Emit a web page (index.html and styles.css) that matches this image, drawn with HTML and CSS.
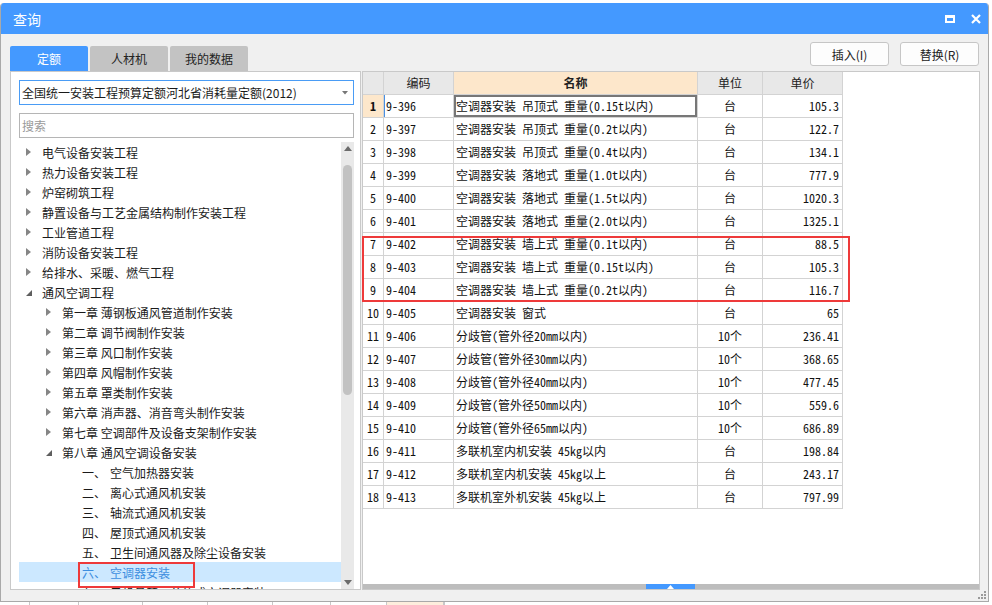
FILE: index.html
```html
<!DOCTYPE html>
<html lang="zh-CN">
<head>
<meta charset="utf-8">
<title>查询</title>
<link rel="stylesheet" href="styles.css">
</head>
<body>
<div class="window">
  <div class="titlebar">
    <span class="title">查询</span>
    <div class="win-ctrls">
      <span class="max"></span>
      <svg class="close" width="10" height="10" viewBox="0 0 10 10"><path d="M1 1 L9 9 M9 1 L1 9" stroke="#fff" stroke-width="2.2" fill="none"/></svg>
    </div>
  </div>
  <div class="content">
    <div class="tabs">
      <div class="tab active">定额</div>
      <div class="tab t2">人材机</div>
      <div class="tab">我的数据</div>
    </div>
    <div class="actions">
      <button class="btn">插入(I)</button>
      <button class="btn">替换(R)</button>
    </div>
    <div class="panel left-panel">
      <div class="select">
        <span>全国统一安装工程预算定额河北省消耗量定额(2012)</span>
        <svg width="6" height="4" viewBox="0 0 6 4"><path d="M0 0 H6 L3 3.5Z" fill="#777"/></svg>
      </div>
      <div class="search">搜索</div>
      <div class="tree-wrap">
        <ul class="tree">
          <li class="row l1"><span class="arr"><svg width="5" height="8" viewBox="0 0 5 8"><path d="M0 0 L5 4 L0 8Z"/></svg></span>电气设备安装工程</li>
          <li class="row l1"><span class="arr"><svg width="5" height="8" viewBox="0 0 5 8"><path d="M0 0 L5 4 L0 8Z"/></svg></span>热力设备安装工程</li>
          <li class="row l1"><span class="arr"><svg width="5" height="8" viewBox="0 0 5 8"><path d="M0 0 L5 4 L0 8Z"/></svg></span>炉窑砌筑工程</li>
          <li class="row l1"><span class="arr"><svg width="5" height="8" viewBox="0 0 5 8"><path d="M0 0 L5 4 L0 8Z"/></svg></span>静置设备与工艺金属结构制作安装工程</li>
          <li class="row l1"><span class="arr"><svg width="5" height="8" viewBox="0 0 5 8"><path d="M0 0 L5 4 L0 8Z"/></svg></span>工业管道工程</li>
          <li class="row l1"><span class="arr"><svg width="5" height="8" viewBox="0 0 5 8"><path d="M0 0 L5 4 L0 8Z"/></svg></span>消防设备安装工程</li>
          <li class="row l1"><span class="arr"><svg width="5" height="8" viewBox="0 0 5 8"><path d="M0 0 L5 4 L0 8Z"/></svg></span>给排水、采暖、燃气工程</li>
          <li class="row l1"><span class="arr open"><svg width="6" height="6" viewBox="0 0 6 6"><path d="M6 0 L6 6 L0 6Z"/></svg></span>通风空调工程</li>
          <li class="row l2"><span class="arr"><svg width="5" height="8" viewBox="0 0 5 8"><path d="M0 0 L5 4 L0 8Z"/></svg></span>第一章 薄钢板通风管道制作安装</li>
          <li class="row l2"><span class="arr"><svg width="5" height="8" viewBox="0 0 5 8"><path d="M0 0 L5 4 L0 8Z"/></svg></span>第二章 调节阀制作安装</li>
          <li class="row l2"><span class="arr"><svg width="5" height="8" viewBox="0 0 5 8"><path d="M0 0 L5 4 L0 8Z"/></svg></span>第三章 风口制作安装</li>
          <li class="row l2"><span class="arr"><svg width="5" height="8" viewBox="0 0 5 8"><path d="M0 0 L5 4 L0 8Z"/></svg></span>第四章 风帽制作安装</li>
          <li class="row l2"><span class="arr"><svg width="5" height="8" viewBox="0 0 5 8"><path d="M0 0 L5 4 L0 8Z"/></svg></span>第五章 罩类制作安装</li>
          <li class="row l2"><span class="arr"><svg width="5" height="8" viewBox="0 0 5 8"><path d="M0 0 L5 4 L0 8Z"/></svg></span>第六章 消声器、消音弯头制作安装</li>
          <li class="row l2"><span class="arr"><svg width="5" height="8" viewBox="0 0 5 8"><path d="M0 0 L5 4 L0 8Z"/></svg></span>第七章 空调部件及设备支架制作安装</li>
          <li class="row l2"><span class="arr open"><svg width="6" height="6" viewBox="0 0 6 6"><path d="M6 0 L6 6 L0 6Z"/></svg></span>第八章 通风空调设备安装</li>
          <li class="row l3"><span class="num">一、</span>空气加热器安装</li>
          <li class="row l3"><span class="num">二、</span>离心式通风机安装</li>
          <li class="row l3"><span class="num">三、</span>轴流式通风机安装</li>
          <li class="row l3"><span class="num">四、</span>屋顶式通风机安装</li>
          <li class="row l3"><span class="num">五、</span>卫生间通风器及除尘设备安装</li>
          <li class="row l3 selected"><span class="num">六、</span>空调器安装</li>
          <li class="row l3"><span class="num">七、</span>风机盘管、分体式空调器安装</li>
        </ul>
        <div class="vscroll">
          <div class="sb-arrow"><svg width="8" height="5" viewBox="0 0 8 5"><path d="M0 5 L4 0 L8 5Z" fill="#6b6b6b"/></svg></div>
          <div class="sb-thumb"></div>
          <div class="sb-fill"></div>
          <div class="sb-arrow"><svg width="8" height="5" viewBox="0 0 8 5"><path d="M0 0 L8 0 L4 5Z" fill="#6b6b6b"/></svg></div>
        </div>
        <div class="mark mark-tree"></div>
      </div>
    </div>
    <div class="panel right-panel">
      <div class="table-area">
        <div class="grid">
          <div class="c h corner"></div><div class="c h">编码</div><div class="c h hl">名称</div><div class="c h">单位</div><div class="c h">单价</div>

          <div class="c n cur">1</div><div class="c code caret">9-396</div><div class="c name focus">空调器安装 吊顶式 重量(0.15t以内)</div><div class="c unit">台</div><div class="c price">105.3</div>
          <div class="c n">2</div><div class="c code">9-397</div><div class="c name">空调器安装 吊顶式 重量(0.2t以内)</div><div class="c unit">台</div><div class="c price">122.7</div>
          <div class="c n">3</div><div class="c code">9-398</div><div class="c name">空调器安装 吊顶式 重量(0.4t以内)</div><div class="c unit">台</div><div class="c price">134.1</div>
          <div class="c n">4</div><div class="c code">9-399</div><div class="c name">空调器安装 落地式 重量(1.0t以内)</div><div class="c unit">台</div><div class="c price">777.9</div>
          <div class="c n">5</div><div class="c code">9-400</div><div class="c name">空调器安装 落地式 重量(1.5t以内)</div><div class="c unit">台</div><div class="c price">1020.3</div>
          <div class="c n">6</div><div class="c code">9-401</div><div class="c name">空调器安装 落地式 重量(2.0t以内)</div><div class="c unit">台</div><div class="c price">1325.1</div>
          <div class="c n">7</div><div class="c code">9-402</div><div class="c name">空调器安装 墙上式 重量(0.1t以内)</div><div class="c unit">台</div><div class="c price">88.5</div>
          <div class="c n">8</div><div class="c code">9-403</div><div class="c name">空调器安装 墙上式 重量(0.15t以内)</div><div class="c unit">台</div><div class="c price">105.3</div>
          <div class="c n">9</div><div class="c code">9-404</div><div class="c name">空调器安装 墙上式 重量(0.2t以内)</div><div class="c unit">台</div><div class="c price">116.7</div>
          <div class="c n">10</div><div class="c code">9-405</div><div class="c name">空调器安装 窗式</div><div class="c unit">台</div><div class="c price">65</div>
          <div class="c n">11</div><div class="c code">9-406</div><div class="c name">分歧管(管外径20mm以内)</div><div class="c unit">10个</div><div class="c price">236.41</div>
          <div class="c n">12</div><div class="c code">9-407</div><div class="c name">分歧管(管外径30mm以内)</div><div class="c unit">10个</div><div class="c price">368.65</div>
          <div class="c n">13</div><div class="c code">9-408</div><div class="c name">分歧管(管外径40mm以内)</div><div class="c unit">10个</div><div class="c price">477.45</div>
          <div class="c n">14</div><div class="c code">9-409</div><div class="c name">分歧管(管外径50mm以内)</div><div class="c unit">10个</div><div class="c price">559.6</div>
          <div class="c n">15</div><div class="c code">9-410</div><div class="c name">分歧管(管外径65mm以内)</div><div class="c unit">10个</div><div class="c price">686.89</div>
          <div class="c n">16</div><div class="c code">9-411</div><div class="c name">多联机室内机安装 45kg以内</div><div class="c unit">台</div><div class="c price">198.84</div>
          <div class="c n">17</div><div class="c code">9-412</div><div class="c name">多联机室内机安装 45kg以上</div><div class="c unit">台</div><div class="c price">243.17</div>
          <div class="c n">18</div><div class="c code">9-413</div><div class="c name">多联机室外机安装 45kg以上</div><div class="c unit">台</div><div class="c price">797.99</div>
        </div>
      </div>
      <div class="hscroll">
        <div class="hthumb"><svg width="7" height="4" viewBox="0 0 7 4"><path d="M0 4 L3.5 0 L7 4Z" fill="#fff"/></svg></div>
      </div>
      <div class="mark mark-grid"></div>
    </div>
  </div>
  <div class="statusbar">
    <svg class="grip" width="10" height="10" viewBox="0 0 10 10">
      <rect x="7" y="1" width="2" height="2" fill="#9a9a9a"/>
      <rect x="4" y="4" width="2" height="2" fill="#9a9a9a"/>
      <rect x="7" y="4" width="2" height="2" fill="#9a9a9a"/>
      <rect x="1" y="7" width="2" height="2" fill="#9a9a9a"/>
      <rect x="4" y="7" width="2" height="2" fill="#9a9a9a"/>
      <rect x="7" y="7" width="2" height="2" fill="#9a9a9a"/>
    </svg>
  </div>
</div>
<div class="behind">
  <span class="bc w30"></span><span class="bc w49"></span><span class="bc w64"></span><span class="bc w65"></span><span class="bc w65"></span><span class="bc w58"></span><span class="bc w56"></span><span class="bc w57 peach"></span><span class="bc"></span>
</div>
</body>
</html>
```

FILE: styles.css
```css
* { box-sizing: border-box; }
html, body { margin: 0; padding: 0; }
body {
  width: 992px;
  height: 605px;
  overflow: hidden;
  padding-top: 3px;
  background: #fff;
  font-family: "Noto Sans CJK SC", "Microsoft YaHei", sans-serif;
  font-size: 12px;
  color: #1a1a1a;
}

.window {
  width: 989px;
  height: 599px;
  border: 1px solid #a9a9a9;
  border-top: 0;
  border-radius: 4px 4px 0 0;
  background: #f0f0f0;
  display: flex;
  flex-direction: column;
  overflow: hidden;
}

.titlebar {
  flex: none;
  height: 31px;
  background: #4499ff;
  color: #fff;
  display: flex;
  align-items: center;
  padding: 0 7px 0 12px;
}
.title { flex: 1; font-size: 14px; line-height: 1; }
.win-ctrls { display: flex; align-items: center; gap: 16px; padding-top: 1px; }
.max {
  display: block;
  width: 10px;
  height: 8px;
  border: 2px solid #fff;
  border-top-width: 3px;
}
.close { display: block; }

.content {
  flex: none;
  height: 556px;
  display: grid;
  grid-template-columns: 351px 618px;
  grid-template-rows: 29px 519px;
  column-gap: 1px;
  padding: 8px 0 0 9px;
}

.tabs { display: flex; align-items: flex-end; gap: 2px; }
.tab {
  width: 78px;
  height: 25px;
  line-height: 25px;
  text-align: center;
  background: #c3c3c3;
  color: #222;
  border-radius: 2px 2px 0 0;
}
.tab.t2 { width: 78px; }
.tab.active { background: #4499ff; color: #fff; }

.actions { display: flex; justify-content: flex-end; align-items: flex-start; gap: 11px; padding-right: 1px; }
.btn {
  width: 79px;
  height: 24px;
  padding: 0;
  border: 1px solid #c6c6c6;
  border-radius: 3px;
  background: #fdfdfd;
  font-family: inherit;
  font-size: 12px;
  color: #222;
}

.panel { border: 1px solid #c9c9c9; background: #fff; }

.left-panel {
  display: flex;
  flex-direction: column;
  padding: 8px 6px 0 8px;
  min-height: 0;
}
.select {
  flex: none;
  height: 25px;
  border: 1px solid #4a9cf5;
  display: flex;
  align-items: center;
  justify-content: space-between;
  padding: 0 5px 0 2px;
  white-space: nowrap;
}
.select svg { display: block; }
.search {
  flex: none;
  height: 25px;
  margin-top: 8px;
  border: 1px solid #b5b5b5;
  color: #9a9a9a;
  line-height: 23px;
  padding-left: 2px;
}
.tree-wrap {
  flex: 1;
  min-height: 0;
  margin-top: 4px;
  display: flex;
  position: relative;
  overflow: hidden;
}
.tree {
  flex: 1;
  list-style: none;
  margin: 0;
  padding: 0;
  overflow: hidden;
}
.row {
  height: 20px;
  display: flex;
  align-items: center;
  white-space: nowrap;
  color: #1a1a1a;
}
.row.l1 { padding-left: 7px; }
.row.l2 { padding-left: 27px; }
.row.l3 { padding-left: 63px; }
.arr { width: 16px; display: flex; align-items: center; }
.arr svg { display: block; fill: #858585; }
.arr.open svg { fill: #5f5f5f; margin-top: 2px; }
.num { width: 28px; }
.row.selected { background: #cce8ff; color: #3d8ee0; }

.vscroll {
  flex: none;
  width: 13px;
  background: #e9e9e9;
  display: flex;
  flex-direction: column;
  align-items: center;
}
.sb-arrow { flex: none; height: 13px; display: flex; align-items: center; justify-content: center; }
.sb-arrow svg { display: block; }
.sb-thumb {
  flex: none;
  width: 9px;
  height: 230px;
  margin-top: 10px;
  border-radius: 5px;
  background: #c2c2c2;
}
.sb-fill { flex: 1; }

.mark { position: absolute; border: 2px solid #ee3a3a; pointer-events: none; }
.mark-tree { left: 59px; top: 420px; width: 117px; height: 26px; }

.right-panel {
  position: relative;
  display: flex;
  flex-direction: column;
  min-height: 0;
}
.table-area { flex: 1; min-height: 0; overflow: hidden; }
.grid {
  display: grid;
  grid-template-columns: 21px 70px 244px 65px 80px;
  width: max-content;
  font-family: "Noto Sans Mono CJK SC", "Liberation Mono", "Noto Sans CJK SC", monospace;
  font-size: 12px;
  color: #111;
}
.c {
  height: 23px;
  line-height: 22px;
  border-right: 1px solid #d3d3d3;
  border-bottom: 1px solid #d3d3d3;
  white-space: nowrap;
  overflow: hidden;
}
.c.h {
  background: #e8e8e8;
  text-align: center;
  font-family: "Noto Sans CJK SC", sans-serif;
  font-size: 12px;
  color: #222;
}
.c.h.hl { background: #fde7cb; font-weight: bold; }
.c.n { text-align: center; background: #fff; }
.c.n.cur { background: #fde7cb; font-weight: bold; }
.c.code { padding-left: 2px; }
.c.code.caret { box-shadow: inset 1px 0 0 #4a90e2; }
.c.name { padding-left: 2px; }
.c.name.focus { box-shadow: inset 0 0 0 2px #777; }
.c.unit { text-align: center; }
.c.price { text-align: right; padding-right: 3px; }

.hscroll { flex: none; height: 5px; background: #bdbdbd; display: flex; }
.hthumb {
  margin-left: 283px;
  width: 49px;
  height: 5px;
  background: #4499ff;
  display: flex;
  align-items: center;
  justify-content: center;
}
.hthumb svg { display: block; }

.mark-grid { left: -1px; top: 164px; width: 488px; height: 66px; }

.statusbar {
  flex: 1;
  display: flex;
  justify-content: flex-end;
  align-items: flex-end;
  padding: 0 1px 1px 0;
}
.grip { display: block; }

.behind { display: flex; height: 3px; }
.bc { height: 3px; border-right: 1px solid #c8c8c8; }
.bc.w30 { width: 30px; }
.bc.w49 { width: 49px; }
.bc.w64 { width: 64px; }
.bc.w65 { width: 65px; }
.bc.w58 { width: 58px; }
.bc.w56 { width: 56px; }
.bc.w57 { width: 57px; }
.bc.peach { background: #fdeedd; }
```
